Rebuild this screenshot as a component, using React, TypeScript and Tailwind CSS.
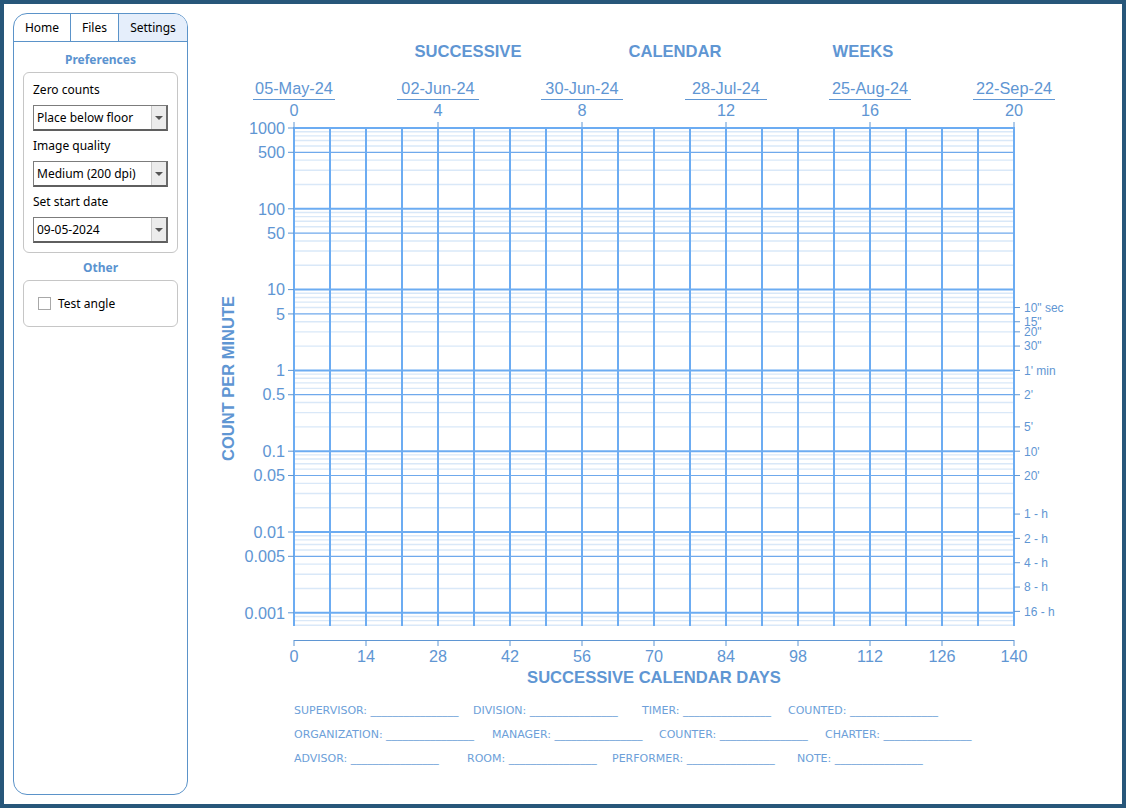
import React from "react";

const BLUE = "#5f96d3";
const X0 = 294;
const X1 = 1014;
const YTOP = 128;
const YBOT = 626;
const DEC = 80.8;
const yOf = (v: number) => YTOP + (3 - Math.log10(v)) * DEC;

const leftLabels = ["1000", "500", "100", "50", "10", "5", "1", "0.5", "0.1", "0.05", "0.01", "0.005", "0.001"];

const rightLabels: [string, number][] = [
  ['10" sec', 6],
  ['15"', 4],
  ['20"', 3],
  ['30"', 2],
  ["1' min", 1],
  ["2'", 0.5],
  ["5'", 0.2],
  ["10'", 0.1],
  ["20'", 0.05],
  ["1 - h", 1 / 60],
  ["2 - h", 1 / 120],
  ["4 - h", 1 / 240],
  ["8 - h", 1 / 480],
  ["16 - h", 1 / 960],
];

const weeks = [
  ["05-May-24", 0],
  ["02-Jun-24", 4],
  ["30-Jun-24", 8],
  ["28-Jul-24", 12],
  ["25-Aug-24", 16],
  ["22-Sep-24", 20],
] as const;

function Chart() {
  const light: number[] = [];
  const mid: number[] = [];
  const heavy: number[] = [];
  for (let e = -4; e <= 3; e++) {
    for (let m = 1; m <= 9; m++) {
      const y = yOf(m * Math.pow(10, e));
      if (y < YTOP - 0.5 || y > YBOT) continue;
      if (m === 1) heavy.push(y);
      else if (m === 5) mid.push(y);
      else light.push(y);
    }
  }
  const verticals = Array.from({ length: 21 }, (_, i) => X0 + i * 36);
  const font = "'Liberation Sans', Arial, sans-serif";

  return (
    <svg width={934} height={690} viewBox="188 4 934 690" className="block">
      <g fontFamily={font} fill={BLUE}>
        <g fontSize={16.6} fontWeight={700} textAnchor="middle">
          <text x={468} y={57}>SUCCESSIVE</text>
          <text x={675} y={57}>CALENDAR</text>
          <text x={863} y={57}>WEEKS</text>
        </g>
        {weeks.map(([d, w]) => {
          const x = X0 + w * 36;
          return (
            <g key={w} fontSize={16.3} textAnchor="middle">
              <text x={x} y={94}>{d}</text>
              <line x1={x - 41} x2={x + 41} y1={99.5} y2={99.5} stroke={BLUE} strokeWidth={1} />
              <text x={x} y={116}>{w}</text>
              <line x1={x} x2={x} y1={122} y2={128} stroke={BLUE} strokeWidth={1} />
            </g>
          );
        })}
      </g>

      {light.map((y, i) => (
        <line key={"l" + i} x1={X0} x2={X1} y1={y} y2={y} stroke="#d9e8f8" strokeWidth={1.4} />
      ))}
      {mid.map((y, i) => (
        <line key={"m" + i} x1={X0} x2={X1} y1={y} y2={y} stroke="#6fa9ec" strokeWidth={1.2} />
      ))}
      {verticals.map((x) => (
        <line key={"v" + x} x1={x} x2={x} y1={YTOP - 1} y2={YBOT} stroke="#6cacf2" strokeWidth={2} />
      ))}
      {heavy.map((y, i) => (
        <line key={"h" + i} x1={X0} x2={X1} y1={y} y2={y} stroke="#6cacf2" strokeWidth={2} />
      ))}

      <g fontFamily={font} fill={BLUE}>
        {leftLabels.map((l) => {
          const y = yOf(parseFloat(l));
          return (
            <g key={l}>
              <line x1={288} x2={X0} y1={y} y2={y} stroke={BLUE} strokeWidth={1} />
              <text x={285} y={y + 5.7} fontSize={16.2} textAnchor="end">{l}</text>
            </g>
          );
        })}
        {rightLabels.map(([l, v]) => {
          const y = yOf(v);
          return (
            <g key={l}>
              <line x1={X1} x2={1020} y1={y} y2={y} stroke={BLUE} strokeWidth={1} />
              <text x={1024} y={y + 4.3} fontSize={12}>{l}</text>
            </g>
          );
        })}
        <text
          transform="translate(234 378.5) rotate(-90)"
          fontSize={16.5}
          fontWeight={700}
          textAnchor="middle"
        >
          COUNT PER MINUTE
        </text>

        <line x1={X0} x2={X1} y1={640.5} y2={640.5} stroke={BLUE} strokeWidth={1} />
        {Array.from({ length: 11 }, (_, i) => {
          const x = X0 + i * 72;
          return (
            <g key={"b" + i}>
              <line x1={x} x2={x} y1={640} y2={646} stroke={BLUE} strokeWidth={1} />
              <text x={x} y={662} fontSize={16.2} textAnchor="middle">{i * 14}</text>
            </g>
          );
        })}
        <text x={654} y={683} fontSize={16.6} fontWeight={700} textAnchor="middle">
          SUCCESSIVE CALENDAR DAYS
        </text>
      </g>
    </svg>
  );
}

const LINE = "________________";

const formRows: [string, number][][] = [
  [["SUPERVISOR:", 179], ["DIVISION:", 169], ["TIMER:", 146], ["COUNTED:", 160]],
  [["ORGANIZATION:", 198], ["MANAGER:", 167], ["COUNTER:", 166], ["CHARTER:", 160]],
  [["ADVISOR:", 173], ["ROOM:", 145], ["PERFORMER:", 185], ["NOTE:", 160]],
];

function Select({ value }: { value: string }) {
  return (
    <div className="flex h-[26px] w-[135px] border border-[#7c7c7c] border-b-2 border-r-2 border-b-[#5f5f5f] border-r-[#6a6a6a] bg-white">
      <div className="flex flex-1 items-center pl-[3px] text-[12px] text-black">{value}</div>
      <div className="flex w-[15px] items-center justify-center border-l border-[#c9c9c9] bg-[#ececec]">
        <div className="h-0 w-0 border-x-[4px] border-t-[4px] border-x-transparent border-t-[#555]" />
      </div>
    </div>
  );
}

function Field({ label, value }: { label: string; value: string }) {
  return (
    <div className="flex flex-col">
      <div className="h-4 text-[12px] leading-4 text-black">{label}</div>
      <div className="mt-[7px]">
        <Select value={value} />
      </div>
    </div>
  );
}

export default function App() {
  return (
    <div
      className="flex h-[808px] w-[1126px] border-4 border-[#27577a] bg-white"
      style={{ fontFamily: "'Noto Sans', 'Open Sans', sans-serif" }}
    >
      <div className="p-[9px] pr-0">
        <div className="flex h-[782px] w-[175px] flex-col overflow-hidden rounded-[14px] border border-[#5b93c9]">
          <div className="flex h-[28px] border-b border-[#5b93c9] text-[12px] text-black">
            <div className="flex w-[57px] items-center justify-center border-r border-[#5b93c9]">Home</div>
            <div className="flex w-[48px] items-center justify-center border-r border-[#5b93c9]">Files</div>
            <div className="flex flex-1 items-center justify-center bg-[#e5eefb]">Settings</div>
          </div>
          <div className="mt-[10px] h-4 text-center text-[12px] font-bold leading-4 text-[#5b93d0]">Preferences</div>
          <div className="mx-[9px] mt-[4px] flex h-[181px] flex-col gap-[7px] rounded-[6px] border border-[#c6c6c6] px-[9px] pt-[9px]">
            <Field label="Zero counts" value="Place below floor" />
            <Field label="Image quality" value="Medium (200 dpi)" />
            <Field label="Set start date" value="09-05-2024" />
          </div>
          <div className="mt-[7px] h-4 text-center text-[12px] font-bold leading-4 text-[#5b93d0]">Other</div>
          <div className="mx-[9px] mt-[4px] flex h-[47px] items-center gap-[7px] rounded-[6px] border border-[#c6c6c6] pl-[14px]">
            <div className="h-[13px] w-[13px] border border-[#a8a8a8] bg-white" />
            <span className="text-[12px] text-black">Test angle</span>
          </div>
        </div>
      </div>

      <div className="flex flex-col">
        <Chart />
        <div
          className="mt-[5px] flex flex-col pl-[106px] text-[11px] text-[#6d9fd9]"
          style={{ fontFamily: "'DejaVu Sans', sans-serif" }}
        >
          {formRows.map((row, r) => (
            <div key={r} className="flex h-6 items-center whitespace-pre">
              {row.map(([label, w]) => (
                <div key={label} style={{ width: w }} className="shrink-0">
                  {label} {LINE}
                </div>
              ))}
            </div>
          ))}
        </div>
      </div>
    </div>
  );
}
